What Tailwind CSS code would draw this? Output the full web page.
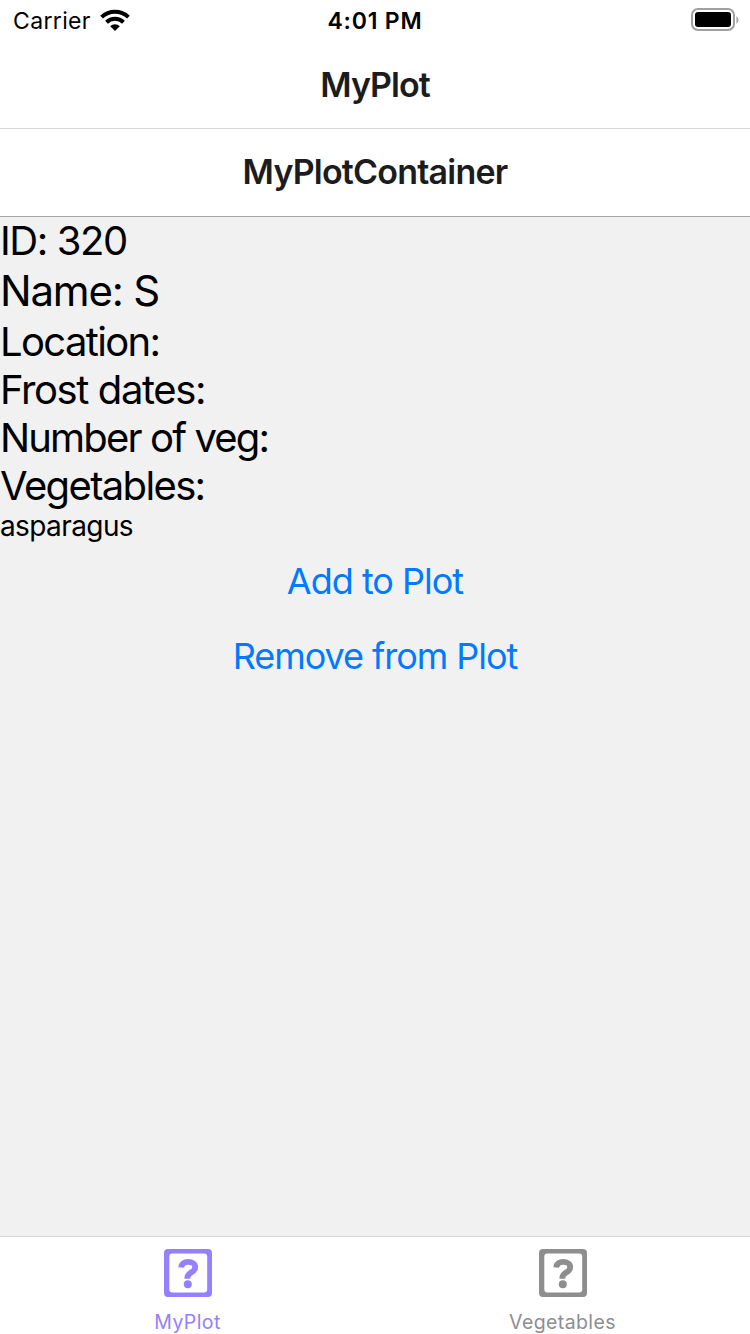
<!DOCTYPE html>
<html lang="en"><head><meta charset="utf-8"><title>MyPlot</title>
<script src="https://cdn.jsdelivr.net/npm/@tailwindcss/browser@4"></script></head>
<body class="w-[750px] h-[1334px] overflow-hidden flex flex-col bg-[#f1f1f1] text-black font-['Inter',sans-serif]">
<svg class="hidden"><symbol id="tab-icon" viewBox="0 0 48 48"><path fill="currentColor" fill-rule="evenodd" d="M4 0H44Q48 0 48 4V44Q48 48 44 48H4Q0 48 0 44V4Q0 0 4 0ZM8.5 4.5Q5.3 4.5 5.3 7.7V40.3Q5.3 43.5 8.5 43.5H40Q43.2 43.5 43.2 40.3V7.7Q43.2 4.5 40 4.5Z"/><path d="M17.2 18.6C17.5 14.9 20.2 12.9 24.2 12.9C28.3 12.9 31.2 14.9 31.2 18C31.2 20.6 29.8 21.9 27.6 23.2C24.6 24.9 23.4 26.2 23.4 28.8V29.7" fill="none" stroke="currentColor" stroke-width="5.8"/><circle cx="23.8" cy="35.3" r="4" fill="currentColor"/></symbol></svg>
<div class="h-10 pt-[2px] bg-white grid grid-cols-3 items-center pl-[13px] pr-[11px] text-[23px] shrink-0">
<div class="flex items-center gap-[9px]"><span class="tracking-[0.35px]">Carrier</span>
<svg class="w-[30px] h-[22px] -mt-[2px]" viewBox="0 0 30 22"><g fill="none" stroke="#000" stroke-width="4"><path d="M1.6 8.1a19.5 19.5 0 0 1 26.8 0"/><path d="M6.5 13.2a12.3 12.3 0 0 1 17 0"/></g><path d="M15 22l-4.8-4.8a6.8 6.8 0 0 1 9.6 0z"/></svg></div>
<div class="text-center font-semibold tracking-[0.8px] -ml-[2px]">4:01 PM</div>
<svg class="w-12 h-6 justify-self-end -mt-[2px]" viewBox="0 0 48 24"><rect x="1" y="1" width="42" height="21" rx="6" fill="none" stroke="#a0a0a0" stroke-width="2"/><rect x="4" y="4" width="36" height="15" rx="3"/><path d="M45.5 8q2 1.5 2 4t-2 4z" fill="#a0a0a0"/></svg>
</div>
<header class="h-[89px] bg-white border-b border-[#d8d8d8] flex items-center justify-center text-[34px] font-semibold tracking-[-1px] text-[#1c1c1e] shrink-0">MyPlot</header>
<header class="h-[88px] pb-[2px] bg-white border-b border-[#a7a7aa] flex items-center justify-center text-[34px] font-semibold tracking-[-0.8px] text-[#1c1c1e] shrink-0">MyPlotContainer</header>
<main class="flex-1 text-[40px] leading-[48px]">
<p class="tracking-[-1.4px]">ID: 320</p><p class="text-[42px] leading-[52px] tracking-[-1.2px]">Name: S</p><p class="tracking-[-1.65px] pt-px">Location:</p><p class="tracking-[-1.4px]">Frost dates:</p><p class="tracking-[-1.85px]">Number of veg:</p><p class="tracking-[-1.65px]">Vegetables:</p><p class="text-[28px] leading-[33px] tracking-[-0.6px]">asparagus</p>
<div class="flex flex-col items-center text-[36px] text-[#007aff]"><button class="h-[75px] tracking-[-1px]">Add to Plot</button><button class="h-[75px] tracking-[-1.05px]">Remove from Plot</button></div>
</main>
<nav class="h-[98px] bg-white border-t border-[#d8d8d8] grid grid-cols-2 text-[19.5px] leading-6 tracking-[0.4px] shrink-0">
<div class="flex flex-col items-center gap-[13px] pt-3 text-[#9580ff]"><svg class="size-12"><use href="#tab-icon"/></svg>MyPlot</div><div class="flex flex-col items-center gap-[13px] pt-3 text-[#8e8e8f]"><svg class="size-12"><use href="#tab-icon"/></svg>Vegetables</div>
</nav></body></html>
